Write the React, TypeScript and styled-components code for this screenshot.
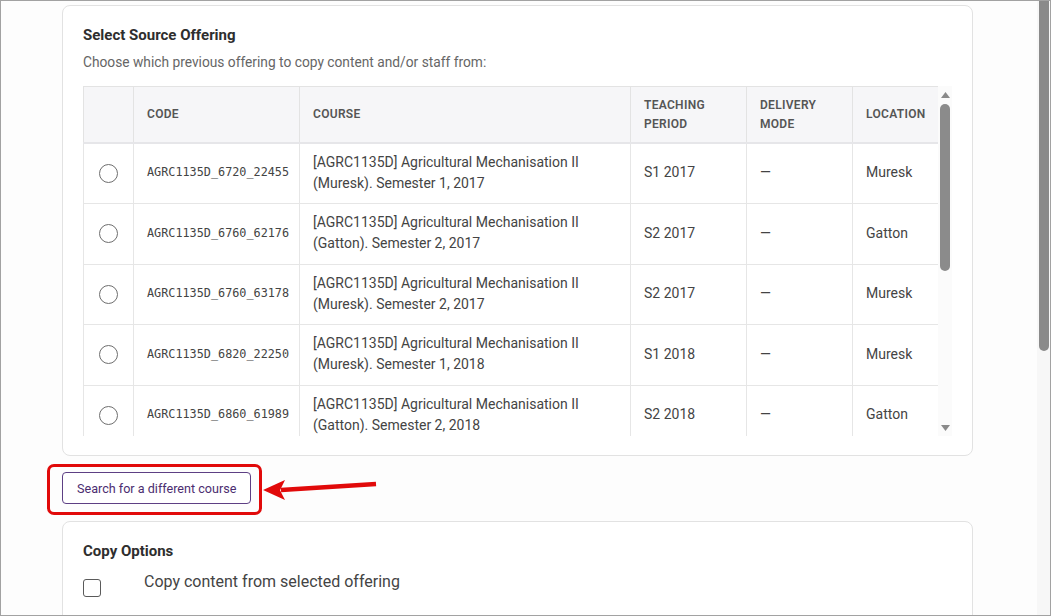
import React from "react";
import styled, { createGlobalStyle } from "styled-components";

const Global = createGlobalStyle`
  html, body { margin: 0; padding: 0; background: #fff; }
  body { font-family: Roboto, "Liberation Sans", Arial, sans-serif; }
  * { box-sizing: border-box; }
`;

const Frame = styled.div`
  width: 1051px;
  height: 616px;
  border: 1px solid #a2a2a2;
  background: #fdfdfd;
  display: flex;
  overflow: hidden;
`;

const Content = styled.div`
  flex: 1;
  overflow: hidden;
  padding: 4px 0 0 61px;
`;

const Inner = styled.div`
  width: 911px;
  display: flex;
  flex-direction: column;
  align-items: flex-start;
`;

const Card = styled.section<{ $tall?: boolean }>`
  width: 100%;
  background: #fff;
  border: 1px solid #e2e2e2;
  border-radius: 8px;
  padding: 19px 20px ${(p) => (p.$tall ? "80px" : "19px")};
`;

const Title = styled.h2`
  margin: 0;
  font-size: 15px;
  line-height: 20px;
  font-weight: 700;
  color: #2e2e2e;
`;

const Subtitle = styled.p`
  margin: 7px 0 0;
  font-size: 13.75px;
  line-height: 20px;
  color: #666;
`;

const TableFrame = styled.div`
  margin-top: 14px;
  height: 350px;
  display: flex;
  overflow: hidden;
`;

const TableClip = styled.div`
  width: 855px;
  overflow: hidden;
`;

const Table = styled.table`
  width: 855px;
  table-layout: fixed;
  border-collapse: collapse;
`;

const Th = styled.th<{ $w: number }>`
  width: ${(p) => p.$w}px;
  height: 56px;
  background: #f6f6f8;
  border: 1px solid #e3e3e3;
  border-bottom: 2px solid #e6e6e9;
  padding: 1px 12px 0 13px;
  text-align: left;
  font-size: 12px;
  line-height: 19px;
  font-weight: 600;
  letter-spacing: 0.3px;
  color: #555;
  text-transform: uppercase;
`;

const Td = styled.td<{ $mono?: boolean; $center?: boolean }>`
  border: 1px solid #e6e6e6;
  border-top: none;
  padding: 8px 12px 9.5px 13px;
  height: 60.5px;
  vertical-align: middle;
  text-align: ${(p) => (p.$center ? "center" : "left")};
  font-family: ${(p) =>
    p.$mono ? `"DejaVu Sans Mono", "Liberation Mono", monospace` : `Roboto, "Liberation Sans", sans-serif`};
  font-size: ${(p) => (p.$mono ? "11.8px" : "14px")};
  line-height: 21px;
  color: #444;
`;

const Radio = styled.span`
  display: inline-block;
  width: 19px;
  height: 19px;
  border: 1px solid #6e6e6e;
  border-radius: 50%;
  vertical-align: middle;
  margin-left: -1px;
`;

const ScrollCol = styled.div`
  width: 14px;
  display: flex;
  flex-direction: column;
  align-items: center;
  background: #fbfbfb;
`;

const ArrowBox = styled.div`
  height: 17px;
  display: flex;
  align-items: center;
  justify-content: center;
`;

const Thumb = styled.div<{ $h: number }>`
  width: 10px;
  height: ${(p) => p.$h}px;
  margin-top: 1px;
  border-radius: 5px;
  background: #8b8b8b;
`;

const Spacer = styled.div`
  flex: 1;
`;

const ButtonRow = styled.div`
  position: relative;
  margin: 16px 0 17px;
`;

const SearchButton = styled.button`
  height: 32px;
  padding: 0 14px;
  border: 1px solid #5d3f84;
  border-radius: 4px;
  background: #fff;
  color: #4b2d70;
  font-family: Roboto, "Liberation Sans", sans-serif;
  font-size: 12.6px;
  cursor: pointer;
`;

const Highlight = styled.div`
  position: absolute;
  left: -15px;
  top: -8px;
  width: 215px;
  height: 51px;
  border: 3px solid #e10a0a;
  border-radius: 7px;
  pointer-events: none;
`;

const Arrow = styled.svg`
  position: absolute;
  left: 199px;
  top: 5px;
  pointer-events: none;
`;

const CheckRow = styled.label`
  display: flex;
  align-items: flex-start;
  margin-top: 11px;
`;

const Checkbox = styled.span`
  width: 18px;
  height: 18px;
  margin-top: 7px;
  border: 1px solid #5a5a5a;
  border-radius: 3px;
  flex-shrink: 0;
`;

const CheckLabel = styled.span`
  margin-left: 43px;
  font-size: 16px;
  line-height: 20px;
  color: #444;
`;

const PageScroll = styled.div`
  width: 13px;
  background: #f7f7f7;
  display: flex;
  justify-content: center;
`;

const PageThumb = styled.div`
  width: 10px;
  height: 350px;
  background: #8a8a8a;
  border-radius: 0 0 5px 5px;
`;

const columns = [
  { label: "", w: 50 },
  { label: "Code", w: 166 },
  { label: "Course", w: 331 },
  { label: "Teaching Period", w: 116 },
  { label: "Delivery Mode", w: 106 },
  { label: "Location", w: 86 },
];

const rows = [
  { code: "AGRC1135D_6720_22455", loc: "Muresk", sem: "Semester 1, 2017", period: "S1 2017" },
  { code: "AGRC1135D_6760_62176", loc: "Gatton", sem: "Semester 2, 2017", period: "S2 2017" },
  { code: "AGRC1135D_6760_63178", loc: "Muresk", sem: "Semester 2, 2017", period: "S2 2017" },
  { code: "AGRC1135D_6820_22250", loc: "Muresk", sem: "Semester 1, 2018", period: "S1 2018" },
  { code: "AGRC1135D_6860_61989", loc: "Gatton", sem: "Semester 2, 2018", period: "S2 2018" },
  { code: "AGRC1135D_6920_22301", loc: "Muresk", sem: "Semester 1, 2019", period: "S1 2019" },
];

export default function App() {
  return (
    <>
      <Global />
      <Frame>
        <Content>
          <Inner>
            <Card>
              <Title>Select Source Offering</Title>
              <Subtitle>Choose which previous offering to copy content and/or staff from:</Subtitle>
              <TableFrame>
                <TableClip>
                  <Table>
                    <thead>
                      <tr>
                        {columns.map((c, i) => (
                          <Th key={i} $w={c.w}>
                            {c.label}
                          </Th>
                        ))}
                      </tr>
                    </thead>
                    <tbody>
                      {rows.map((r) => (
                        <tr key={r.code}>
                          <Td $center>
                            <Radio />
                          </Td>
                          <Td $mono>{r.code}</Td>
                          <Td>
                            [AGRC1135D] Agricultural Mechanisation II
                            <br />({r.loc}). {r.sem}
                          </Td>
                          <Td>{r.period}</Td>
                          <Td>—</Td>
                          <Td>{r.loc}</Td>
                        </tr>
                      ))}
                    </tbody>
                  </Table>
                </TableClip>
                <ScrollCol>
                  <ArrowBox>
                    <svg width="9" height="6" viewBox="0 0 9 6">
                      <path d="M4.5 0 L9 6 L0 6 Z" fill="#8a8a8a" />
                    </svg>
                  </ArrowBox>
                  <Thumb $h={167} />
                  <Spacer />
                  <ArrowBox>
                    <svg width="9" height="6" viewBox="0 0 9 6">
                      <path d="M0 0 L9 0 L4.5 6 Z" fill="#8a8a8a" />
                    </svg>
                  </ArrowBox>
                </ScrollCol>
              </TableFrame>
            </Card>
            <ButtonRow>
              <SearchButton>Search for a different course</SearchButton>
              <Highlight />
              <Arrow width="118" height="24" viewBox="0 0 118 24">
                <path d="M20 13 L115 7" stroke="#e10a0a" strokeWidth="4.5" strokeLinecap="butt" />
                <path d="M2 13 L24 3 L19 13.2 L24 23 Z" fill="#e10a0a" />
              </Arrow>
            </ButtonRow>
            <Card $tall>
              <Title>Copy Options</Title>
              <CheckRow>
                <Checkbox />
                <CheckLabel>Copy content from selected offering</CheckLabel>
              </CheckRow>
            </Card>
          </Inner>
        </Content>
        <PageScroll>
          <PageThumb />
        </PageScroll>
      </Frame>
    </>
  );
}
